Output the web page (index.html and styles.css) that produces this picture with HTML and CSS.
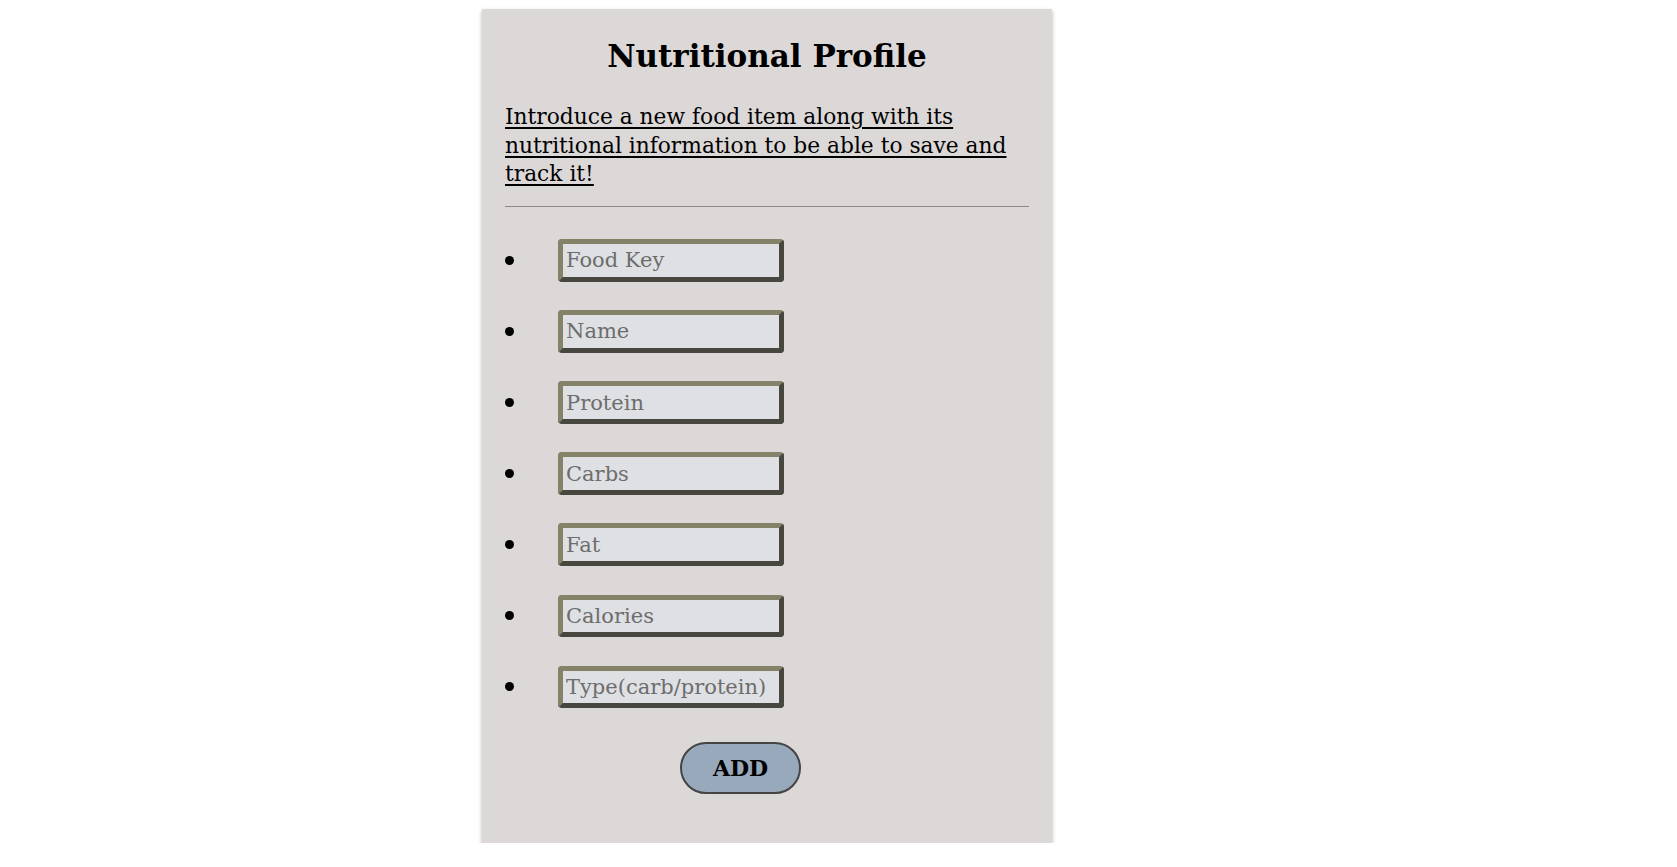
FILE: index.html
```html
<!DOCTYPE html>
<html lang="en">
<head>
<meta charset="utf-8">
<title>Nutritional Profile</title>
<link rel="stylesheet" href="styles.css">
</head>
<body>
<div class="card">
  <h1 class="title">Nutritional Profile</h1>
  <p class="intro">Introduce a new food item along with its nutritional information to be able to save and track it!</p>
  <hr class="divider">
  <ul class="fields">
    <li class="field"><input class="field-input" type="text" placeholder="Food Key"></li>
    <li class="field"><input class="field-input" type="text" placeholder="Name"></li>
    <li class="field"><input class="field-input" type="text" placeholder="Protein"></li>
    <li class="field"><input class="field-input" type="text" placeholder="Carbs"></li>
    <li class="field"><input class="field-input" type="text" placeholder="Fat"></li>
    <li class="field"><input class="field-input" type="text" placeholder="Calories"></li>
    <li class="field"><input class="field-input" type="text" placeholder="Type(carb/protein)"></li>
  </ul>
  <div class="actions">
    <button class="add-btn" type="button">ADD</button>
  </div>
</div>
</body>
</html>
```
FILE: styles.css
```css
html, body {
  margin: 0;
  padding: 0;
  background: #ffffff;
}

body {
  font-family: "DejaVu Serif", "Liberation Serif", serif;
  color: #000;
}

.card {
  box-sizing: border-box;
  width: 570px;
  margin: 9px 0 0 482px;
  padding: 27px 23px 49px 23px;
  background: #dcd8d8;
  box-shadow: 0 2px 4px rgba(0, 0, 0, 0.3);
}

.title {
  margin: 0;
  font-size: 31px;
  line-height: 40px;
  font-weight: bold;
  text-align: center;
}

.intro {
  margin: 27px 0 0 0;
  font-size: 21.75px;
  line-height: 28.7px;
  text-decoration: underline;
  text-decoration-thickness: 1.5px;
  text-underline-offset: 3px;
}

.divider {
  margin: 17px 0 0 0;
  border: 0;
  border-top: 1px solid #8a8888;
  height: 0;
}

.fields {
  list-style: none;
  margin: 32px 0 0 0;
  padding: 0;
  display: flex;
  flex-direction: column;
  gap: 28.6px;
}

.field {
  display: flex;
  align-items: center;
  gap: 44px;
}

.field::before {
  content: "";
  width: 9px;
  height: 9px;
  border-radius: 50%;
  background: #000;
  flex: none;
}

.field-input {
  box-sizing: border-box;
  width: 226px;
  height: 42.5px;
  margin: 0;
  padding: 0 2px 0 3px;
  border-style: solid;
  border-width: 5px;
  border-color: #848369 #47463f #47463f #848369;
  border-radius: 4px;
  background: #dfe0e4;
  font-family: "DejaVu Serif", "Liberation Serif", serif;
  font-size: 21px;
  color: #333;
  outline: none;
}

.field-input::placeholder {
  color: #6d6d6d;
  opacity: 1;
}

.actions {
  margin-top: 33.6px;
  padding-left: 175px;
}

.add-btn {
  box-sizing: border-box;
  width: 121px;
  height: 52px;
  margin: 0;
  padding: 0;
  border: 2px solid #444444;
  border-radius: 26px;
  background: #98a9bb;
  font-family: "DejaVu Serif", "Liberation Serif", serif;
  font-size: 22px;
  font-weight: bold;
  color: #000;
}
```
